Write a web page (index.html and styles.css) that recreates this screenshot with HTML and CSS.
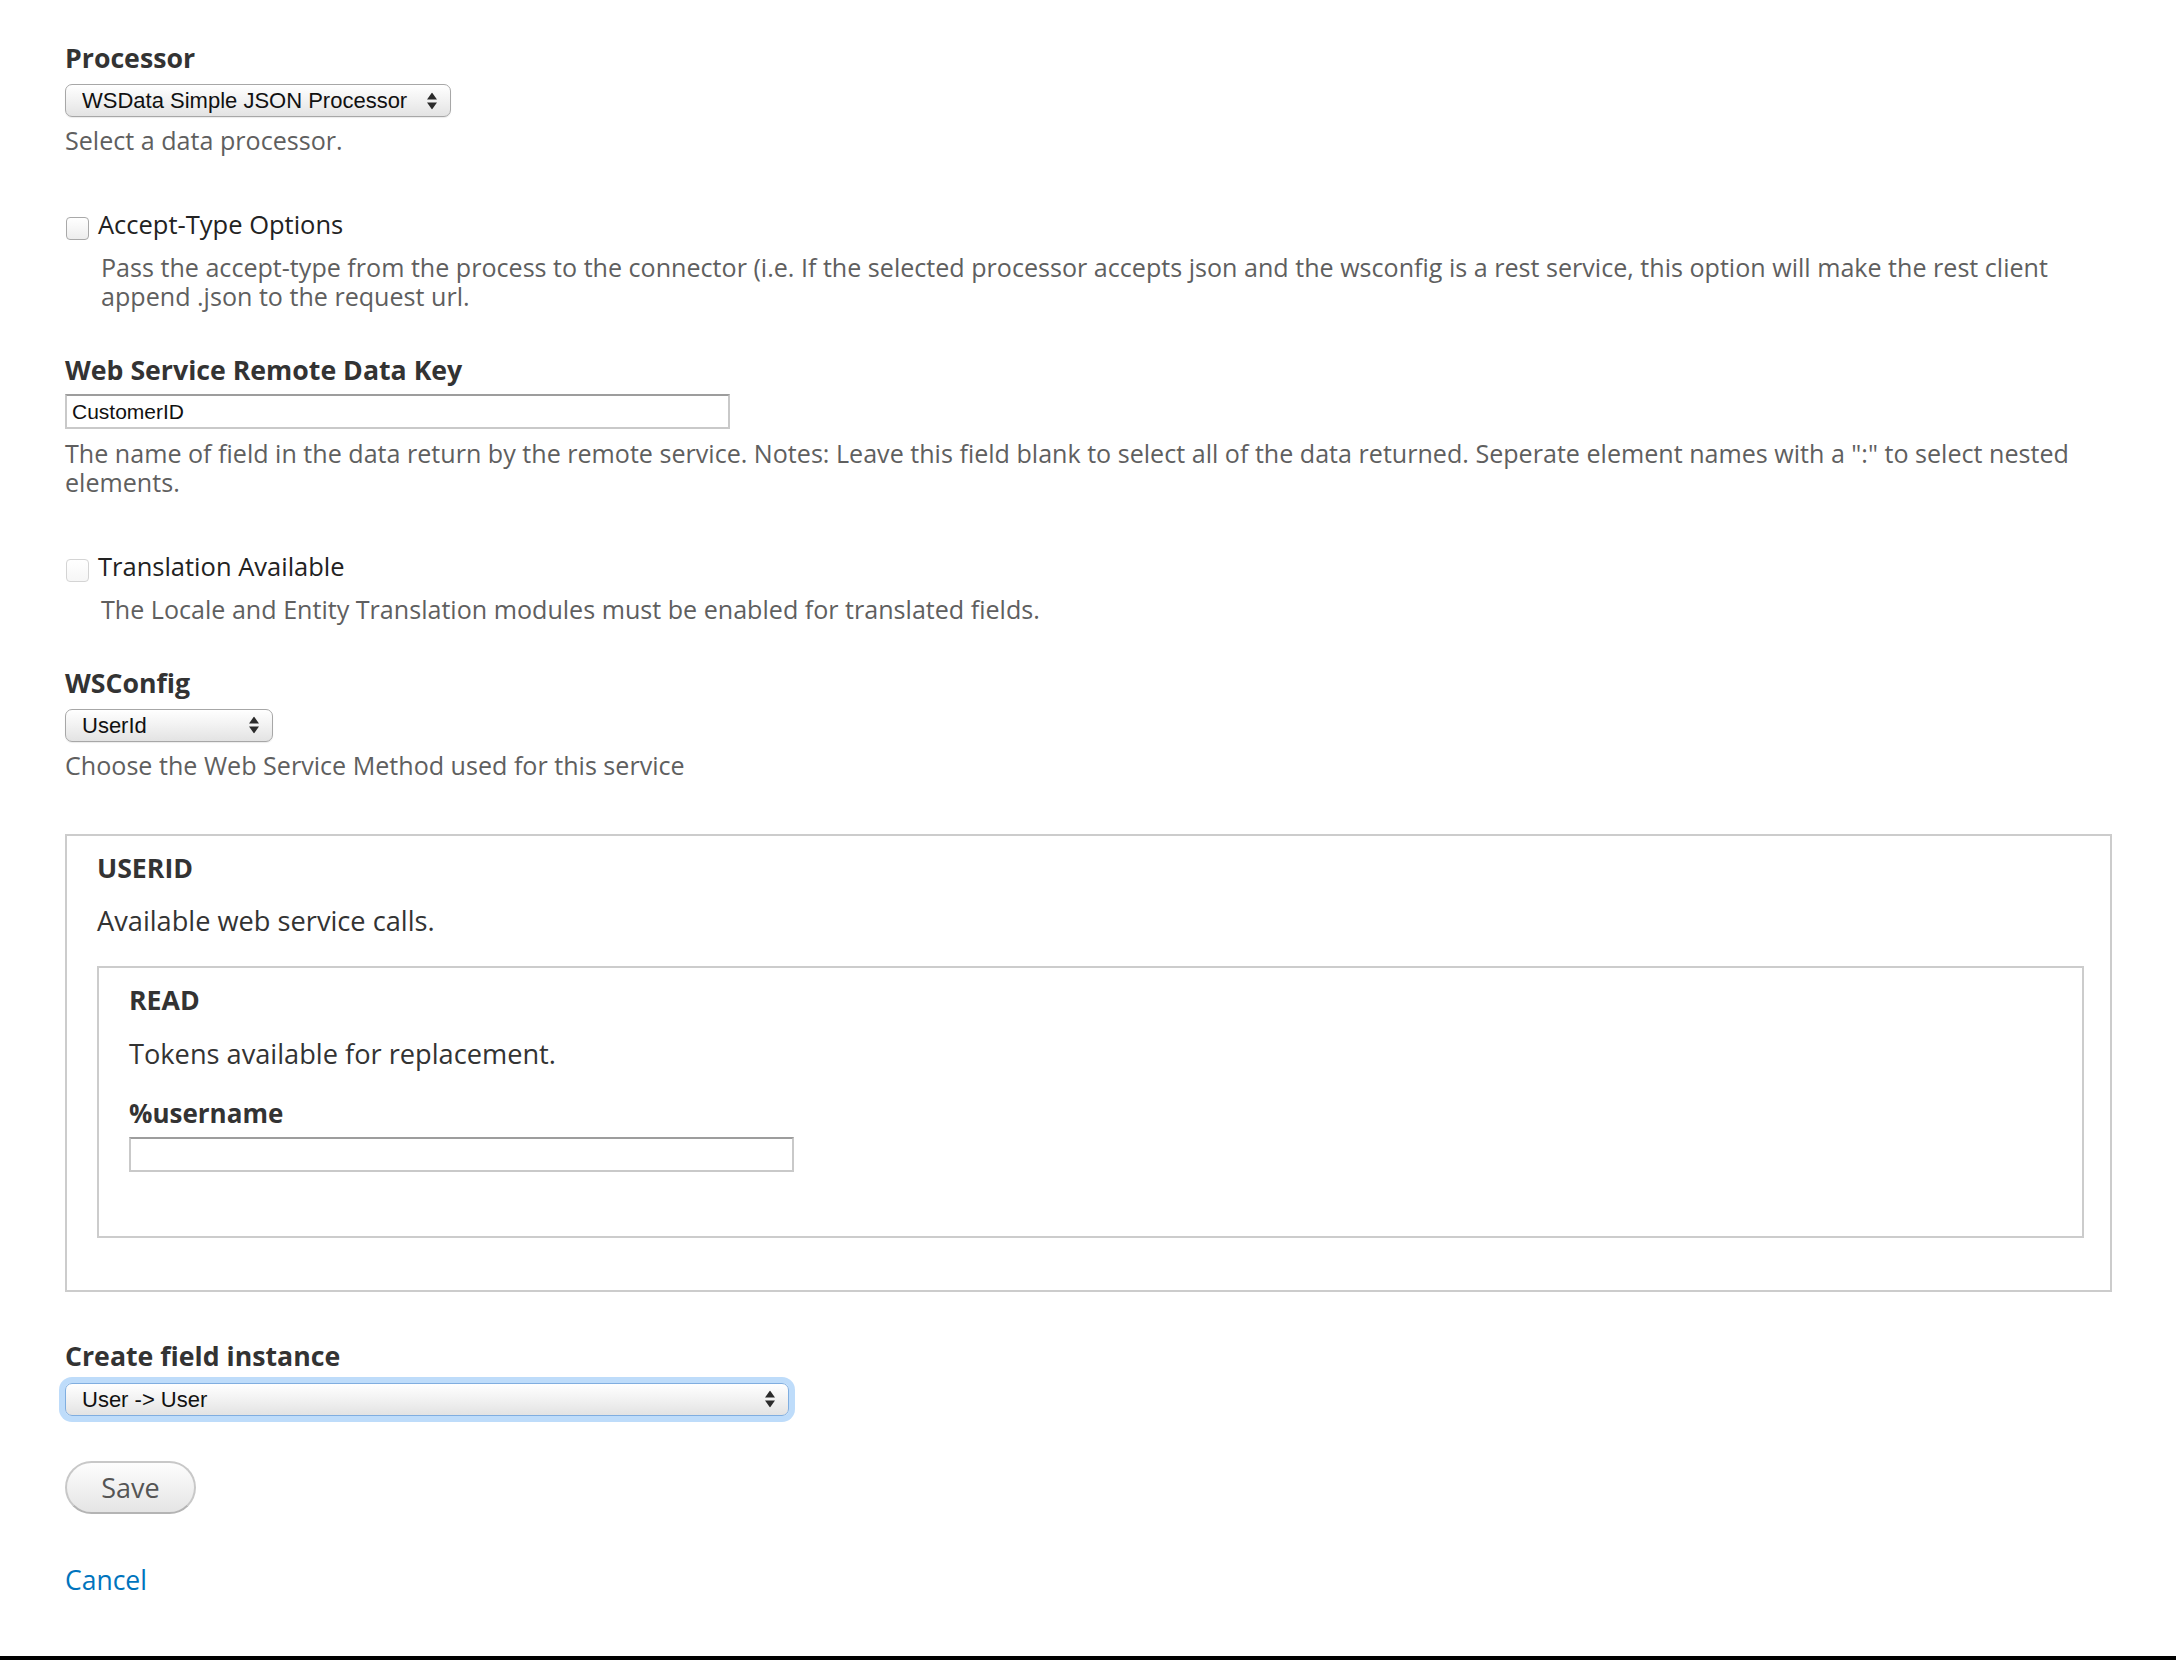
FILE: index.html
```html
<!DOCTYPE html>
<html lang="en">
<head>
    <meta charset="UTF-8">
    <meta name="viewport" content="width=device-width, initial-scale=1.0">
    <title>Web Service Field</title>
    <link rel="stylesheet" href="styles.css">
</head>
<body>
    <div class="page">
        <form class="ws-form">

            <!-- Processor -->
            <div class="form-item first">
                <label class="form-label" for="processor">Processor</label>
                <div class="select-wrap">
                    <select class="form-select select-processor" id="processor">
                        <option>WSData Simple JSON Processor</option>
                    </select>
                    <svg class="select-arrows" viewBox="0 0 10 17"><polygon points="5,0 10,7 0,7"/><polygon points="0,10 10,10 5,17"/></svg>
                </div>
                <div class="description">Select a data processor.</div>
            </div>

            <!-- Accept type -->
            <div class="form-item form-type-checkbox">
                <div class="checkbox-row">
                    <input type="checkbox" class="form-checkbox" id="accept-type">
                    <label class="option" for="accept-type">Accept-Type Options</label>
                </div>
                <div class="description">Pass the accept-type from the process to the connector (i.e. If the selected processor accepts json and the wsconfig is a rest service, this option will make the rest client append .json to the request url.</div>
            </div>

            <!-- Remote data key -->
            <div class="form-item">
                <label class="form-label" for="remote-key">Web Service Remote Data Key</label>
                <input type="text" class="form-text" id="remote-key" value="CustomerID">
                <div class="description">The name of field in the data return by the remote service. Notes: Leave this field blank to select all of the data returned. Seperate element names with a ":" to select nested elements.</div>
            </div>

            <!-- Translation -->
            <div class="form-item form-type-checkbox">
                <div class="checkbox-row">
                    <input type="checkbox" class="form-checkbox is-disabled" id="translation" disabled>
                    <label class="option" for="translation">Translation Available</label>
                </div>
                <div class="description">The Locale and Entity Translation modules must be enabled for translated fields.</div>
            </div>

            <!-- WSConfig -->
            <div class="form-item">
                <label class="form-label" for="wsconfig">WSConfig</label>
                <div class="select-wrap">
                    <select class="form-select select-wsconfig" id="wsconfig">
                        <option>UserId</option>
                    </select>
                    <svg class="select-arrows" viewBox="0 0 10 17"><polygon points="5,0 10,7 0,7"/><polygon points="0,10 10,10 5,17"/></svg>
                </div>
                <div class="description">Choose the Web Service Method used for this service</div>
            </div>

            <!-- Available calls -->
            <fieldset class="ws-fieldset">
                <div class="fieldset-title">UserId</div>
                <div class="fieldset-description">Available web service calls.</div>

                <fieldset class="ws-fieldset inner">
                    <div class="fieldset-title">Read</div>
                    <div class="fieldset-description">Tokens available for replacement.</div>
                    <div class="form-item token-item">
                        <label class="form-label" for="token-username">%username</label>
                        <input type="text" class="form-text" id="token-username" value="">
                    </div>
                </fieldset>
            </fieldset>

            <!-- Field instance -->
            <div class="form-item after-fieldset">
                <label class="form-label" for="field-instance">Create field instance</label>
                <div class="select-wrap">
                    <select class="form-select select-instance is-focused" id="field-instance">
                        <option>User -&gt; User</option>
                    </select>
                    <svg class="select-arrows" viewBox="0 0 10 17"><polygon points="5,0 10,7 0,7"/><polygon points="0,10 10,10 5,17"/></svg>
                </div>
            </div>

            <div class="form-actions">
                <button type="button" class="form-submit">Save</button>
                <a href="#" class="cancel-link">Cancel</a>
            </div>
        </form>
    </div>
</body>
</html>
```

FILE: styles.css
```css
* {
    box-sizing: border-box;
}

body {
    margin: 0;
    font-family: "Open Sans", "Liberation Sans", sans-serif;
    color: #333;
    background: #fff;
}

.page {
    min-height: 100vh;
    padding: 42px 64px 0 65px;
    border-bottom: 4px solid #000;
}

/* Form items */
.form-item {
    margin-top: 43px;
}

.form-item.first {
    margin-top: 0;
}

.form-item.form-type-checkbox {
    margin-top: 53px;
}

.form-label {
    display: block;
    font-size: 26.7px;
    line-height: 32px;
    font-weight: 700;
    color: #333;
    margin-bottom: 8px;
}

.description {
    font-size: 25.1px;
    line-height: 29px;
    color: #5f5f5f;
    margin-top: 9.5px;
}

.select-wrap + .description {
    margin-top: 9px;
}

/* Checkboxes */
.checkbox-row {
    display: flex;
    align-items: flex-start;
    gap: 9px;
}

.form-checkbox {
    appearance: none;
    -webkit-appearance: none;
    width: 23px;
    height: 23px;
    margin: 9px 0 0 1px;
    border: 1px solid #a9a9a9;
    border-radius: 4px;
    background: linear-gradient(#ffffff, #ededed);
}

.form-checkbox.is-disabled {
    border-color: #d4d4d4;
    background: linear-gradient(#ffffff, #f6f6f6);
}

.option {
    font-size: 25.5px;
    line-height: 32px;
    color: #222;
}

.form-type-checkbox .description {
    margin-top: 13px;
    margin-left: 36px;
}

/* Text fields */
.form-text {
    display: block;
    width: 665px;
    height: 35px;
    padding: 0 5px;
    border: 2px solid #c9c9c9;
    border-top-color: #9d9d9d;
    border-radius: 0;
    font-family: "Liberation Sans", Arial, sans-serif;
    font-size: 21px;
    color: #111;
    background: #fff;
}

/* Selects */
.select-wrap {
    position: relative;
    width: fit-content;
    margin-top: 10px;
}

.form-select {
    appearance: none;
    -webkit-appearance: none;
    display: block;
    height: 33px;
    margin: 0;
    padding: 0 40px 0 16px;
    border: 1px solid #a7a7a7;
    border-radius: 7px;
    font-family: "Liberation Sans", Arial, sans-serif;
    font-size: 22px;
    color: #111;
    background: linear-gradient(#ffffff 0%, #f3f3f3 45%, #e3e3e3 100%);
    box-shadow: inset 0 1px 0 #fff, 0 1px 1px rgba(0, 0, 0, 0.08);
}

.select-processor {
    width: 386px;
}

.select-wsconfig {
    width: 208px;
}

.select-instance {
    width: 724px;
}

.form-select.is-focused {
    border-color: #80aee0;
    box-shadow: 0 0 0 6px #bedcfa;
}

.select-arrows {
    position: absolute;
    right: 14px;
    top: 50%;
    width: 10px;
    height: 17px;
    transform: translateY(-50%);
    fill: #2b2b2b;
    pointer-events: none;
}

.after-fieldset {
    margin-top: 48px;
}

.after-fieldset .select-wrap {
    margin-top: 11px;
}

/* Fieldsets */
.ws-fieldset {
    min-width: 0;
    margin: 54px 0 0;
    padding: 16px 26px 52px 30px;
    border: 2px solid #ccc;
}

.ws-fieldset.inner {
    margin-top: 27px;
    padding: 16px 30px 64px 30px;
}

.fieldset-title {
    font-size: 26.7px;
    line-height: 32px;
    font-weight: 700;
    color: #333;
    text-transform: uppercase;
}

.fieldset-description {
    font-size: 27.2px;
    line-height: 36px;
    color: #333;
    margin-top: 19.5px;
}

.token-item {
    margin-top: 25px;
}

.token-item .form-label {
    font-size: 26px;
}

/* Actions */
.form-submit {
    display: block;
    width: 131px;
    height: 53px;
    margin-top: 45.5px;
    padding: 0;
    border: 2px solid #c8c8c8;
    border-bottom-color: #b4b4b4;
    border-radius: 27px;
    font-family: "Open Sans", sans-serif;
    font-size: 27px;
    color: #555;
    background: linear-gradient(#fdfdfd, #e5e5e5);
    cursor: pointer;
}

.cancel-link {
    display: block;
    width: fit-content;
    margin-top: 50px;
    font-size: 26.5px;
    line-height: 32px;
    color: #0074bd;
    text-decoration: none;
}
```
